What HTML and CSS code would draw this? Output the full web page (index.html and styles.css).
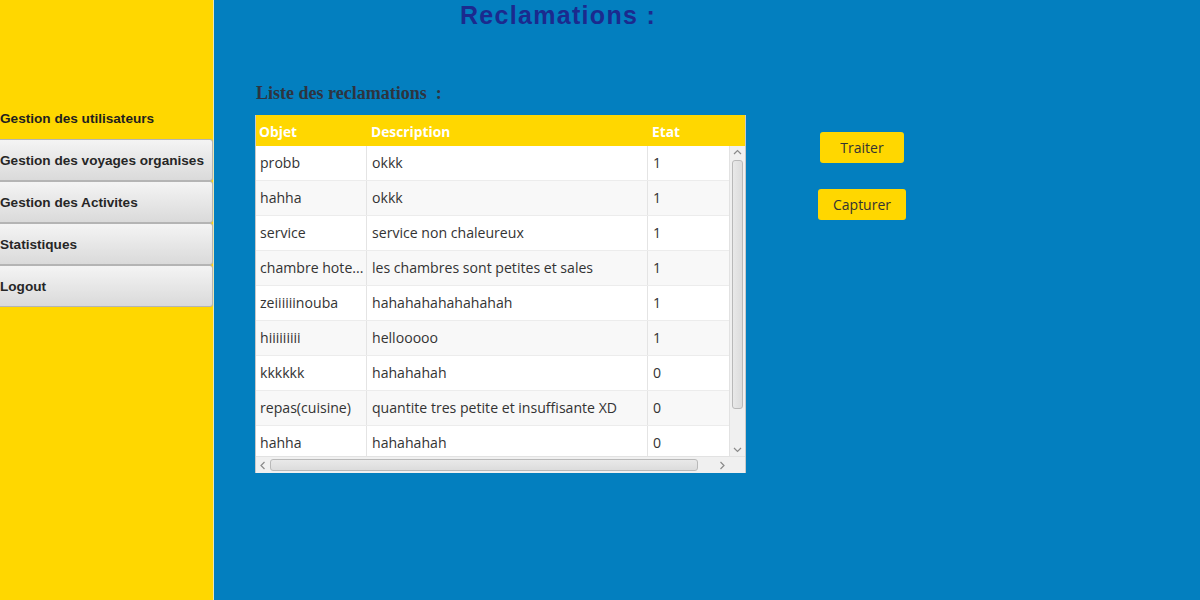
FILE: index.html
```html
<!DOCTYPE html>
<html>
<head>
<meta charset="utf-8">
<link rel="stylesheet" href="styles.css">
</head>
<body>
<div class="app">
  <aside class="sidebar">
    <div class="nav-item active">Gestion des utilisateurs</div>
    <div class="nav-item">Gestion des voyages organises</div>
    <div class="nav-item">Gestion des Activites</div>
    <div class="nav-item">Statistiques</div>
    <div class="nav-item">Logout</div>
  </aside>
  <main class="main">
    <h1 class="title">Reclamations :</h1>
    <h2 class="subtitle">Liste des reclamations&nbsp; :</h2>
    <div class="content">
      <div class="table">
        <div class="thead">
          <div class="th">Objet</div>
          <div class="th">Description</div>
          <div class="th">Etat</div>
          <div class="th"></div>
        </div>
        <div class="tbody-wrap">
          <div class="rows">
            <div class="row"><div class="td">probb</div><div class="td">okkk</div><div class="td">1</div></div>
            <div class="row alt"><div class="td">hahha</div><div class="td">okkk</div><div class="td">1</div></div>
            <div class="row"><div class="td">service</div><div class="td">service non chaleureux</div><div class="td">1</div></div>
            <div class="row alt"><div class="td">chambre hote...</div><div class="td">les chambres sont petites et sales</div><div class="td">1</div></div>
            <div class="row"><div class="td">zeiiiiiinouba</div><div class="td">hahahahahahahahah</div><div class="td">1</div></div>
            <div class="row alt"><div class="td">hiiiiiiiii</div><div class="td">hellooooo</div><div class="td">1</div></div>
            <div class="row"><div class="td">kkkkkk</div><div class="td">hahahahah</div><div class="td">0</div></div>
            <div class="row alt"><div class="td">repas(cuisine)</div><div class="td">quantite tres petite et insuffisante XD</div><div class="td">0</div></div>
            <div class="row"><div class="td">hahha</div><div class="td">hahahahah</div><div class="td">0</div></div>
          </div>
          <div class="vscroll">
            <svg class="arrow" width="15" height="12" viewBox="0 0 15 12"><path d="M4 8 L7.5 4.5 L11 8" fill="none" stroke="#8a8a8a" stroke-width="1.2"/></svg>
            <div class="vthumb"></div>
            <div class="vtrack"></div>
            <svg class="arrow" width="15" height="12" viewBox="0 0 15 12"><path d="M4 4 L7.5 7.5 L11 4" fill="none" stroke="#8a8a8a" stroke-width="1.2"/></svg>
          </div>
        </div>
        <div class="hscroll">
          <svg class="harrow" width="14" height="15" viewBox="0 0 14 15"><path d="M8.5 4 L5 7.5 L8.5 11" fill="none" stroke="#8a8a8a" stroke-width="1.2"/></svg>
          <div class="hthumb"></div>
          <div class="htrack"></div>
          <svg class="harrow" width="14" height="15" viewBox="0 0 14 15"><path d="M5.5 4 L9 7.5 L5.5 11" fill="none" stroke="#8a8a8a" stroke-width="1.2"/></svg>
          <div class="corner"></div>
        </div>
      </div>
      <div class="actions">
        <button class="btn btn-traiter">Traiter</button>
        <button class="btn btn-capturer">Capturer</button>
      </div>
    </div>
  </main>
</div>
</body>
</html>
```

FILE: styles.css
```css
html, body {
  margin: 0;
  padding: 0;
  height: 100%;
}
body {
  background: #037fbf;
  font-family: "Open Sans", "Liberation Sans", sans-serif;
}
.app {
  display: flex;
  height: 600px;
}
.sidebar {
  width: 213px;
  flex: none;
  background: #ffd700;
  border-right: 1px solid #ebe6b5;
  padding-top: 97px;
  box-sizing: content-box;
}
.nav-item {
  height: 42px;
  box-sizing: border-box;
  width: 213px;
  display: flex;
  align-items: center;
  font-family: "Liberation Sans", Arial, sans-serif;
  font-weight: bold;
  font-size: 13.6px;
  color: #262626;
  border: 1px solid #b4b4b4;
  border-left: none;
  border-radius: 0 3px 3px 0;
  background: linear-gradient(#f4f4f4, #dadada);
  padding-top: 1px;
}
.nav-item.active {
  background: transparent;
  border-color: transparent;
  color: #1f1f1f;
}
.main {
  flex: 1;
  padding-left: 41px;
}
.title {
  margin: 0;
  height: 30px;
  line-height: 30px;
  padding-left: 205px;
  font-family: "Liberation Sans", Arial, sans-serif;
  font-weight: bold;
  font-size: 25px;
  letter-spacing: 1.3px;
  color: #1b2a8e;
}
.subtitle {
  margin: 53px 0 0 1px;
  height: 20px;
  line-height: 20px;
  font-family: "Liberation Serif", "Times New Roman", serif;
  font-weight: bold;
  font-size: 18px;
  color: #2e3440;
}
.content {
  display: flex;
  margin-top: 12px;
}
.table {
  width: 491px;
  height: 358px;
  box-sizing: border-box;
  border: 1px solid #c9c9c9;
  border-top: none;
  background: #fff;
  display: flex;
  flex-direction: column;
}
.thead {
  display: grid;
  grid-template-columns: 112px 281px 82px 1fr;
  height: 31px;
  background: #ffd700;
}
.th {
  color: #fff;
  font-weight: bold;
  font-size: 13.8px;
  line-height: 31px;
  padding-left: 3px;
  padding-top: 1px;
}
.tbody-wrap {
  display: flex;
  height: 310px;
}
.rows {
  flex: 1;
  overflow: hidden;
}
.row {
  display: grid;
  grid-template-columns: 111px 281px 1fr;
  height: 35px;
  border-bottom: 1px solid #ececec;
  box-sizing: border-box;
  background: #fff;
}
.row.alt {
  background: #f8f8f8;
}
.td {
  font-size: 14.1px;
  color: #333;
  line-height: 33px;
  padding-left: 4px;
  border-right: 1px solid #e4e4e4;
  white-space: nowrap;
  overflow: hidden;
}
.td:nth-child(2) {
  padding-left: 5px;
}
.td:last-child {
  border-right: none;
  padding-left: 5px;
}
.vscroll {
  width: 15px;
  flex: none;
  background: #f0f0f0;
  border-left: 1px solid #e2e2e2;
  display: flex;
  flex-direction: column;
  align-items: center;
}
.arrow {
  display: block;
  flex: none;
}
.vthumb {
  width: 11px;
  height: 249px;
  box-sizing: border-box;
  border: 1px solid #b9b9b9;
  border-radius: 3px;
  background: linear-gradient(90deg, #e9e9e9, #dcdcdc);
  margin-top: 2px;
}
.vtrack {
  flex: 1;
}
.hscroll {
  height: 16px;
  flex: none;
  display: flex;
  align-items: center;
  background: #f0f0f0;
  border-top: 1px solid #e2e2e2;
}
.harrow {
  display: block;
  flex: none;
}
.hthumb {
  width: 428px;
  height: 12px;
  box-sizing: border-box;
  border: 1px solid #b9b9b9;
  border-radius: 3px;
  background: linear-gradient(#e9e9e9, #dcdcdc);
}
.htrack {
  flex: 1;
}
.corner {
  width: 16px;
  height: 16px;
  background: #f0f0f0;
}
.actions {
  width: 100px;
  margin-left: 66px;
  padding-top: 17px;
  display: flex;
  flex-direction: column;
  align-items: center;
  gap: 26px;
}
.btn {
  height: 31px;
  border: none;
  border-radius: 3px;
  background: #ffd700;
  color: #333;
  font-family: "Open Sans", "Liberation Sans", sans-serif;
  font-size: 14px;
  padding: 0;
}
.btn-traiter {
  width: 84px;
}
.btn-capturer {
  width: 88px;
}
```
